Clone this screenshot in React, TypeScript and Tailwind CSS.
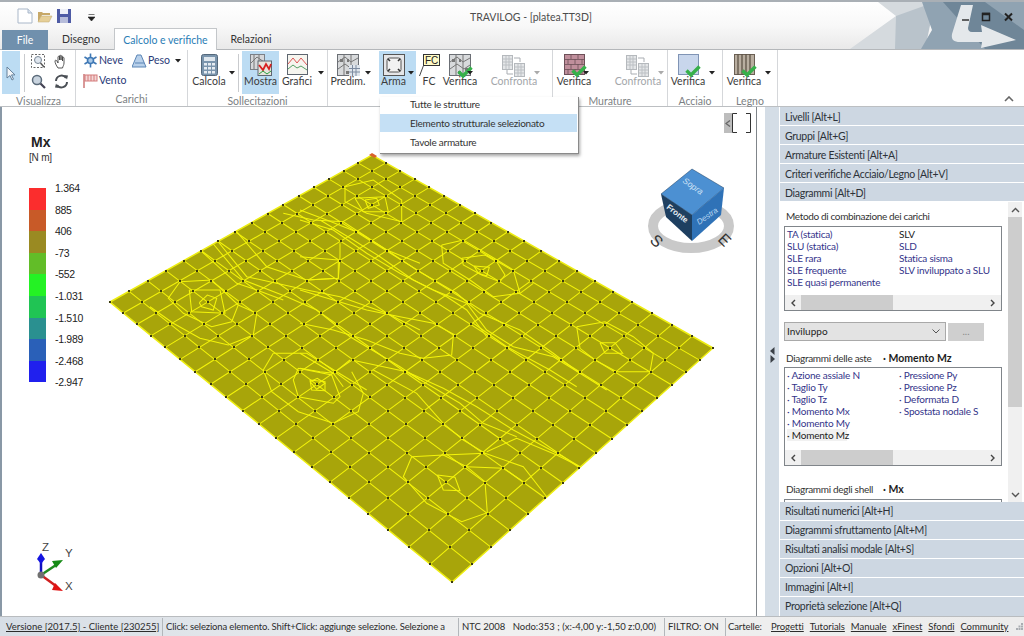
import React from "react";

const F = { fontFamily: 'Lato, "Noto Sans", sans-serif' };

/* ---------- small icons ---------- */
const Check = () => (
  <svg className="absolute right-[-2px] bottom-[-2px]" width="16" height="12" viewBox="0 0 16 12">
    <path d="M1.5 5.5 L6 10 L14.500 1.500" fill="none" stroke="#36b04a" strokeWidth="3.4" />
  </svg>
);
const Mosaic = () => (
  <svg width="22" height="22" viewBox="0 0 22 22">
    <rect x="0.5" y="0.5" width="21" height="21" fill="#d8dadc" stroke="#6b6f75" />
    <path d="M1 8 L8 3 L14 8 L21 4 M1 15 L8 10 L15 15 L21 11 M7 1 V21 M14 1 V21" fill="none" stroke="#777" strokeWidth="1" />
    <path d="M3 5h3v3h-3zM16 14h3v3h-3zM9 17h3v3h-3zM10 5h2v3h-2z" fill="#777" />
  </svg>
);
const ChevDown = () => (
  <svg width="6" height="4" viewBox="0 0 6 4"><path d="M0 0h6L3 3.5z" fill="#222" /></svg>
);
const ChevDownGray = () => (
  <svg width="6" height="4" viewBox="0 0 6 4"><path d="M0 0h6L3 3.5z" fill="#aaa" /></svg>
);
const Sheets = () => (
  <svg width="24" height="24" viewBox="0 0 24 24">
    <g fill="#e4e6e8" stroke="#b5b9bd">
      <rect x="0.5" y="1.5" width="10" height="14" />
      <rect x="12.5" y="9.5" width="10" height="13" />
    </g>
    <path d="M1 5h9M1 8h9M1 11h9M13 13h9M13 16h9M13 19h9M16 10v12M19 10v12M4 2v13M7 2v13" stroke="#bcc0c4" />
    <path d="M12 4h6v4M11 20H5v-4" fill="none" stroke="#a9adb2" />
  </svg>
);

const Big = ({ w, label, icon, arrow, active, gray, ml = 0, arrowGap = 0, pr = 0 }: { w: number; label: string; icon: React.ReactNode; arrow?: boolean; active?: boolean; gray?: boolean; ml?: number; arrowGap?: number; pr?: number }) => (
  <div className={`relative flex flex-col items-center h-[43px] pt-[3px] ${active ? "bg-[#bcdcf3]" : ""}`} style={{ width: w, marginLeft: ml, paddingRight: pr }}>
    <div className="h-[20px] flex items-start justify-center">{icon}</div>
    <div className={`text-[10.5px] leading-[15px] whitespace-nowrap ${gray ? "text-[#a3a6aa]" : "text-[#3c3c3c]"}`}>{label}</div>
    {arrow && <div className="absolute top-[20px]" style={{ right: -arrowGap }}>{gray ? <ChevDownGray /> : <ChevDown />}</div>}
  </div>
);

const Group = ({ w, label, children }: { w: number; label: string; children: React.ReactNode }) => (
  <div className="relative flex flex-col h-full border-r border-[#d5d7da] shrink-0" style={{ width: w }}>
    <div className="flex h-[43px] mt-[1px]">{children}</div>
    <div className="h-[13px] mt-[1px] text-center text-[10.5px] leading-[13px] text-[#7c7f83] whitespace-nowrap">{label}</div>
  </div>
);

const Acc = ({ t }: { t: string }) => (
  <div className="h-[18px] mb-px shrink-0 bg-[#cdd7e2] pl-[5px] text-[10.5px] tracking-[-0.3px] leading-[20px] text-[#2c3238] whitespace-nowrap overflow-hidden">{t}</div>
);
const AccLow = ({ t, last }: { t: string; last?: boolean }) => (
  <div className={`shrink-0 bg-[#cdd7e2] pl-[5px] text-[10.5px] tracking-[-0.3px] leading-[18px] text-[#2c3238] whitespace-nowrap ${last ? "h-[19px]" : "h-[18px] mb-px"}`}>{t}</div>
);

const HScroll = () => (
  <div className="flex h-[15px] bg-[#f0f0f0] items-center shrink-0 text-[#333]">
    <div className="w-[16px] flex justify-center">
      <svg width="6" height="8" viewBox="0 0 6 8"><path d="M5 1L2 4l3 3" fill="none" stroke="#444" strokeWidth="1.4" /></svg>
    </div>
    <div className="w-[92px] h-full bg-[#cdcdcd]" />
    <div className="flex-1" />
    <div className="w-[16px] flex justify-center">
      <svg width="6" height="8" viewBox="0 0 6 8"><path d="M1 1l3 3-3 3" fill="none" stroke="#444" strokeWidth="1.4" /></svg>
    </div>
  </div>
);

/* ---------- mesh ---------- */
function homography(p: number[][]) {
  const [[x0, y0], [x1, y1], [x2, y2], [x3, y3]] = p;
  const dx1 = x1 - x2, dx2 = x3 - x2, sx = x0 - x1 + x2 - x3;
  const dy1 = y1 - y2, dy2 = y3 - y2, sy = y0 - y1 + y2 - y3;
  const det = dx1 * dy2 - dx2 * dy1;
  const g = (sx * dy2 - dx2 * sy) / det;
  const h = (dx1 * sy - sx * dy1) / det;
  const a = x1 - x0 + g * x1, b = x3 - x0 + h * x3, c = x0;
  const d = y1 - y0 + g * y1, e = y3 - y0 + h * y3, f = y0;
  return (u: number, v: number) => {
    const w = g * u + h * v + 1;
    return [(a * u + b * v + c) / w, (d * u + e * v + f) / w];
  };
}
const H = homography([[110, 302], [372, 155], [713, 348], [452, 582]]);
const NU = 16, NV = 20;
const gridLines: string[] = [];
for (let j = 1; j < NV; j++) {
  const a = H(0, j / NV), b = H(1, j / NV);
  gridLines.push(`M${a[0].toFixed(1)} ${a[1].toFixed(1)}L${b[0].toFixed(1)} ${b[1].toFixed(1)}`);
}
for (let i = 1; i < NU; i++) {
  const a = H(i / NU, 0), b = H(i / NU, 1);
  gridLines.push(`M${a[0].toFixed(1)} ${a[1].toFixed(1)}L${b[0].toFixed(1)} ${b[1].toFixed(1)}`);
}
const nodes: number[][] = [];
for (let i = 0; i <= NU; i++) for (let j = 0; j <= NV; j++) nodes.push(H(i / NU, j / NV));

/* contour lines traced from 3x crops: coordinates are crop pixels, converted with the crop's origin */
const T = (ox: number, oy: number, s: string) =>
  s.split(" ").map((p) => {
    const [x, y] = p.split(",").map(Number);
    return (ox + x / 3).toFixed(1) + "," + (oy + y / 3).toFixed(1);
  }).join(" ");

const contours: string[] = [
  ...[
    "522,228 568,232 560,258 535,250 522,228",
    "485,205 555,195 590,215 615,255 600,275 545,255 490,225 485,205",
    "425,165 490,150 575,200 640,240 660,310 580,320 510,270 430,220 425,165",
    "0,60 80,90 180,130 260,180 350,240 470,310 540,370 660,420 760,490 840,550",
    "0,90 100,120 200,190 300,250 400,300 500,340 560,420 640,470 760,500 840,550 920,600",
    "60,90 160,150 240,200 340,270 440,320 500,360 560,440",
    "115,210 115,265 20,270",
    "0,200 115,210",
    "460,435 455,495 370,505 300,490 200,450 100,420 0,400",
    "0,300 100,330 200,360 300,380 400,400 465,435",
    "520,400 620,470 750,540 830,590",
    "660,310 700,280",
    "900,458 945,458 968,490 915,490 900,458",
    "830,410 915,395 1000,440 1060,490 1050,545 950,545 885,510 840,475 830,410",
    "0,490 100,550 150,510",
    "0,535 60,545 100,550 130,590",
    "30,575 52,565 75,580 50,598 30,575",
  ].map((s) => T(300, 190, s)),
  ...[
    "240,60 285,65 285,92 245,90 240,60",
    "205,25 305,45 330,110 310,130 205,110 190,60 205,25",
    "100,30 125,95 205,155 310,190 385,155 400,100 365,35",
    "622,345 675,352 690,392 640,390 622,345",
    "545,290 640,285 710,320 765,365 772,458 695,485 590,430 520,350 545,290",
    "365,0 530,35 640,85 740,140 850,210 1000,290 1050,320",
    "430,30 560,100 640,190 700,240 765,280 880,320 950,410",
    "770,275 860,235 980,285 1050,320",
    "640,285 765,280",
    "710,320 820,325 880,365",
    "530,35 690,130 760,190 860,230",
  ].map((s) => T(230, 360, s)),
  ...[
    "298,458 322,435 350,445 340,480 305,470 298,458",
    "268,420 360,420 375,490 275,485 268,420",
    "240,395 335,390 415,465 395,515 335,530 250,490 205,445 240,395",
    "415,465 470,490 460,555 385,585 300,565 220,520 150,470",
    "250,330 300,300 410,400 470,420 550,450",
    "330,270 430,390 560,440 650,480 750,560 900,650 960,690",
    "350,270 440,380 620,420 720,440 860,490 960,540",
    "410,245 500,350 620,390 715,385 720,320 720,280",
    "550,190 640,210 730,215 860,300 960,340",
    "520,610 620,610 710,665 800,720",
    "490,660 520,610",
    "795,150 830,145 838,165 805,175 795,150",
    "765,145 855,140 865,185 790,185 765,145",
    "735,110 820,90 905,150 905,215 800,190 735,155 735,110",
  ].map((s) => T(100, 150, s)),
];

const PLATE = "110,302 372,155 713,348 452,582";

const Mesh = () => (
  <svg className="absolute left-0 top-0" width="756" height="509" viewBox="0 107 756 509">
    <defs>
      <clipPath id="plate"><polygon points={PLATE} /></clipPath>
    </defs>
    <polygon points={PLATE} fill="#a8a50a" stroke="#eded10" strokeWidth="1.5" />
    <g clipPath="url(#plate)" fill="none" stroke="#f4f40a" strokeWidth="1.05">
      <path d={gridLines.join("")} />
      {contours.map((p, k) => <polyline key={k} points={p} />)}
    </g>
    <g fill="#3a3a10">
      {nodes.map(([x, y], k) => <rect key={k} x={Math.round(x) - 1} y={Math.round(y) - 1} width="2" height="2" />)}
    </g>
    <path d="M369 155l3-2 5 3-2 2z" fill="#d9622b" />
  </svg>
);

const Cube = () => (
  <svg className="absolute left-0 top-0" width="756" height="509" viewBox="0 107 756 509">
    <ellipse cx="691" cy="226" rx="38" ry="22" fill="none" stroke="#c9c9c9" strokeWidth="10" />
    <polygon points="692,169 724,188 692,215 661,194" fill="#4c90d2" stroke="#1e3f60" strokeWidth="0.5" />
    <polygon points="661,194 692,215 692,241 666,217" fill="#1e3f60" />
    <polygon points="692,215 724,188 721,215 692,241" fill="#2f72b7" />
    <g style={{ fontFamily: '"Liberation Sans", sans-serif' }}>
      <text x="0" y="0" transform="translate(682,182) rotate(35)" fontSize="8.5" fill="#cfe3f6" fontStyle="italic">Sopra</text>
      <text x="0" y="0" transform="translate(666,208) rotate(38)" fontSize="8" fontWeight="700" fill="#e4ebf1">Fronte</text>
      <text x="0" y="0" transform="translate(699,225) rotate(-35)" fontSize="8" fill="#b9d7f2" fontStyle="italic">Destra</text>
      <text x="0" y="0" transform="translate(649,241) rotate(45)" fontSize="16" fill="#333">S</text>
      <text x="0" y="0" transform="translate(717,240) rotate(45)" fontSize="16" fill="#333">E</text>
    </g>
  </svg>
);

const Axes = () => (
  <svg className="absolute left-[30px] top-[432px]" width="50" height="55" viewBox="30 539 50 55">
    <path d="M41 575V558" stroke="#1010c0" strokeWidth="2.5" />
    <path d="M41 553l4 6-4 5-4-5z" fill="#1414e0" />
    <path d="M41 575L56 565" stroke="#1f8a1f" strokeWidth="2.5" />
    <path d="M63 560l-11 1 4 7z" fill="#148a14" />
    <path d="M41 575L56 586" stroke="#d02020" strokeWidth="2.5" />
    <path d="M63 591l-11-1 3-7z" fill="#e01414" />
    <circle cx="41" cy="575" r="3.5" fill="#707070" />
    <g fontSize="11.5" fill="#444" style={{ fontFamily: '"Liberation Sans", sans-serif' }}>
      <text x="42" y="551">Z</text>
      <text x="65" y="557">Y</text>
      <text x="65" y="590">X</text>
    </g>
  </svg>
);

const legend = [
  ["#fb2d2d", "1.364"], ["#c85a28", "885"], ["#9a8a22", "406"], ["#62bd28", "-73"], ["#24f224", "-552"],
  ["#20c454", "-1.031"], ["#2a9090", "-1.510"], ["#2a60b8", "-1.989"], ["#2020ee", "-2.468"],
];

const Legend = () => (
  <div className="absolute left-[29px] top-[27px] flex flex-col" style={{ fontFamily: '"Liberation Sans", sans-serif' }}>
    <div className="text-[14px] leading-[16px] font-bold text-[#222] ml-[2px] h-[16px]">Mx</div>
    <div className="text-[10px] leading-[12px] text-[#333] h-[12px] mt-[2px] tracking-[-0.2px]">[N m]</div>
    <div className="flex mt-[24px]">
      <div className="flex flex-col w-[17px]">
        {legend.map(([c]) => <div key={c} className="h-[21.6px]" style={{ background: c }} />)}
      </div>
      <div className="ml-[9px] -mt-[7px] flex flex-col text-[10.5px] tracking-[-0.3px] text-[#222]">
        {legend.map(([c, t]) => <div key={c} className="h-[21.6px] leading-[14px]">{t}</div>)}
        <div className="h-[14px] leading-[14px]">-2.947</div>
      </div>
    </div>
  </div>
);

const Sep = () => <div className="w-px h-[18px] bg-[#b3b7bb] mx-[2px] shrink-0" />;

export default function App() {
  const u = "underline whitespace-nowrap";
  const listText = "flex-1 flex pl-[2px] pt-[1px] text-[#34348a] text-[10px] tracking-[-0.2px] leading-[12px] whitespace-nowrap";
  return (
    <div className="relative w-[1024px] h-[636px] overflow-hidden bg-white flex flex-col text-[#333]" style={F}>
      {/* title + tabs */}
      <div className="relative h-[50px] shrink-0 border-t-2 border-[#a9afb5] bg-gradient-to-b from-white via-[#f8f8f8] to-[#e9e9e9] border-b border-b-[#b4b7ba]">
        <svg className="absolute right-0 top-0" width="176" height="47" viewBox="848 2 176 47">
          <polygon points="878,2 940,2 895,49 850,49 896,16" fill="#d5dade" />
          <polygon points="896,16 935,2 925,49 895,49" fill="#b9c3cb" />
          <polygon points="922,2 1024,2 1024,49 921,49 932,30" fill="#90a3b2" />
          <polygon points="943,2 985,2 1024,30 1024,49 985,49" fill="#6f8698" />
          <path d="M961 5h12l-5 23c0 2 1 4 4 4h10l-1-7 35 15-35 8 1-6h-22c-6 0-9-2-8-8z" fill="#e4e8eb" />
        </svg>
        <svg className="absolute left-[17px] top-[6px]" width="60" height="16" viewBox="0 0 60 16">
          <path d="M1 1h10l4 4v10H1z" fill="#fff" stroke="#a9b7c9" />
          <path d="M11 1v4h4" fill="#dce5f0" stroke="#a9b7c9" />
          <path d="M21 4h4l1 1h7v2H25l-3 6h-1z" fill="#c7a868" />
          <path d="M24 8h11l-3 6H21z" fill="#e6cf98" stroke="#bca66e" strokeWidth="0.5" />
          <rect x="40" y="1" width="14" height="14" fill="#4e5ba5" />
          <rect x="43" y="1" width="8" height="5" fill="#eef0f8" />
          <rect x="43" y="9" width="8" height="6" fill="#b6bcda" />
        </svg>
        <svg className="absolute left-[88px] top-[12px]" width="7" height="7" viewBox="0 0 7 7">
          <path d="M0.5 0.5h6M0 3h7L3.5 7z" fill="#222" stroke="#222" strokeWidth="0.6" />
        </svg>
        <div className="absolute left-[470px] top-[7px] text-[10.5px] leading-[16px] text-[#4c4c4c] whitespace-nowrap">TRAVILOG - [platea.TT3D]</div>
        <svg className="absolute left-[960px] top-[9px]" width="56" height="12" viewBox="0 0 56 12">
          <path d="M2 9h7" stroke="#333" strokeWidth="1.5" />
          <rect x="22.5" y="2.5" width="7" height="7" fill="none" stroke="#222" strokeWidth="1.5" />
          <path d="M22 3h8" stroke="#222" strokeWidth="2.5" />
          <path d="M45 2.5l7 7M52 2.5l-7 7" stroke="#222" strokeWidth="2" />
        </svg>
        <div className="absolute left-[2px] top-[27px] h-[21px] flex items-end">
          <div className="w-[46px] h-[20px] bg-[#7090ad] text-white text-[10.5px] leading-[20px] text-center">File</div>
          <div className="w-[66px] h-[21px] text-center text-[10.5px] leading-[20px] text-[#333]">Disegno</div>
          <div className="w-[103px] h-[23px] -mb-[1px] bg-white border border-b-0 border-[#c4c7ca] text-center text-[10.5px] leading-[22px] text-[#2a7db5] whitespace-nowrap">Calcolo e verifiche</div>
          <div className="w-[68px] h-[21px] text-center text-[10.5px] leading-[20px] text-[#333]">Relazioni</div>
        </div>
      </div>

      {/* ribbon */}
      <div className="relative h-[57px] shrink-0 bg-white border-b border-[#bcbfc2] flex pl-[2px]">
        <Group w={74} label="Visualizza">
          <div className="w-[18px] h-[43px] bg-[#bcdcf3] flex justify-center pt-[15px]">
            <svg width="10" height="15" viewBox="0 0 10 15"><path d="M1 1v11l3-2.5 2 4.5 1.5-.8-2-4.3H9z" fill="#f3f6f9" stroke="#65819b" /></svg>
          </div>
          <div className="w-px h-[38px] bg-[#c9cbce] ml-[4px] mt-[3px]" />
          <div className="grid grid-cols-2 gap-x-[7px] gap-y-[5px] ml-[6px] mt-[3px] content-start">
            <svg width="15" height="15" viewBox="0 0 15 15"><rect x="0.5" y="0.5" width="13" height="13" fill="none" stroke="#666" strokeDasharray="2 1.5" /><circle cx="7" cy="6" r="3.5" fill="#dfe6ee" stroke="#7a8896" /><path d="M9.5 9l3.5 4" stroke="#555" strokeWidth="1.5" /></svg>
            <svg width="16" height="15" viewBox="0 0 16 15"><path d="M4 14C2 11 1 9 1 7c0-1 1-1 2 0l1 2V3c0-1 1.500-1 1.500 0v3V2c0-1 1.500-1 1.500 0v4V2.500c0-1 1.500-1 1.500 0V7V4c0-1 1.500-1 1.500 0v5c0 2-1 3-1.500 5z" fill="#fff" stroke="#444" strokeWidth="0.9" /></svg>
            <svg width="15" height="15" viewBox="0 0 15 15"><circle cx="6" cy="6" r="4.5" fill="#c9d4df" stroke="#5b6b7a" strokeWidth="1.5" /><path d="M9.500 9.500L14 14" stroke="#445" strokeWidth="2.2" /></svg>
            <svg width="15" height="15" viewBox="0 0 15 15"><path d="M2 7A5.500 5.500 0 0 1 12 4M13 8A5.500 5.500 0 0 1 3 11" fill="none" stroke="#4a4f55" strokeWidth="2" /><path d="M10 1l4 .5-1 4zM5 14l-4-.5 1-4z" fill="#4a4f55" /></svg>
          </div>
        </Group>

        <Group w={112} label="Carichi">
          <div className="pl-[7px] pt-[2px] flex flex-col gap-[5px]">
            <div className="flex items-center h-[15px]">
              <svg width="15" height="15" viewBox="0 0 15 15"><g stroke="#3f78b5" strokeWidth="1.6" fill="none"><path d="M7.500 0.500v14M1.500 4l12 7M13.500 4l-12 7" /><circle cx="7.500" cy="7.500" r="3" fill="#a9c9e8" /></g></svg>
              <span className="text-[10.5px] ml-[1px] w-[33px] leading-[15px] text-[#2a3a78]">Neve</span>
              <svg width="15" height="14" viewBox="0 0 15 14"><path d="M5 1h4l5 12H0z" fill="#b8d0ea" stroke="#5b85b5" /><path d="M3 9h9" stroke="#5b85b5" /></svg>
              <span className="text-[10.5px] ml-[1px] w-[27px] leading-[15px] text-[#2a3a78]">Peso</span>
              <span className="flex"><ChevDown /></span>
            </div>
            <div className="flex items-center h-[15px]">
              <svg width="15" height="15" viewBox="0 0 15 15"><path d="M1 1v14" stroke="#c77" strokeWidth="1.500" /><rect x="2" y="2" width="12" height="6" fill="#f3d7d7" stroke="#d47a7a" /><path d="M5 2v6M8 2v6M11 2v6" stroke="#d47a7a" /></svg>
              <span className="text-[10.5px] ml-[1px] leading-[15px] text-[#2a3a78]">Vento</span>
            </div>
          </div>
        </Group>

        <Group w={140} label="Sollecitazioni">
          <Big w={32} ml={5} label="Calcola" arrow arrowGap={10} icon={
            <svg width="17" height="22" viewBox="0 0 17 22"><rect x="0.500" y="0.500" width="16" height="21" rx="2" fill="#7b95ad" stroke="#54687b" /><rect x="3" y="3" width="11" height="4" fill="#dfe7ee" /><g fill="#e6ecf2"><rect x="3" y="9" width="3" height="2.500" /><rect x="7" y="9" width="3" height="2.500" /><rect x="11" y="9" width="3" height="2.500" /><rect x="3" y="13" width="3" height="2.500" /><rect x="7" y="13" width="3" height="2.500" /><rect x="11" y="13" width="3" height="2.500" /><rect x="3" y="17" width="3" height="2.500" /><rect x="7" y="17" width="3" height="2.500" /><rect x="11" y="17" width="3" height="2.500" /></g></svg>
          } />
          <div className="w-px h-[38px] bg-[#c9cbce] ml-[13px] mt-[3px]" />
          <Big w={37} ml={3} label="Mostra" active icon={
            <svg width="22" height="22" viewBox="0 0 22 22"><rect x="0.500" y="0.500" width="14" height="15" fill="#d5d7da" stroke="#7b8087" /><path d="M1 9l6-6 7 5M4 1v14M9 1v14" stroke="#777" fill="none" /><rect x="8" y="7" width="13.500" height="14.500" fill="#e7e4dd" stroke="#5e6670" /><path d="M9 11l4 5 3-6 3 5 2-5" fill="none" stroke="#d72020" strokeWidth="1.800" /><path d="M9 20l4-3 4 3 4-3" fill="none" stroke="#2b9f3d" /></svg>
          } />
          <Big w={36} label="Grafici" arrow arrowGap={9} icon={
            <svg width="21" height="21" viewBox="0 0 21 21"><rect x="0.500" y="0.500" width="20" height="20" fill="#f6f5ef" stroke="#5e6670" /><path d="M1 10l5-6 4 5 4-5 6 7" fill="none" stroke="#dc5555" /><path d="M1 15l5-4 4 3 4-2 6 4" fill="none" stroke="#55a066" /></svg>
          } />
        </Group>

        <Group w={225} label="">
          <Big w={40} ml={0} label="Predim." arrow arrowGap={3} icon={
            <div className="relative"><Mosaic /><svg className="absolute right-[-1px] bottom-0" width="11" height="11" viewBox="0 0 11 11"><rect width="11" height="11" fill="#dfe5ec" /><path d="M0 3.500h11M0 7h11M3.500 0v11M7 0v11" stroke="#7d8ba0" /></svg></div>
          } />
          <Big w={37} ml={11} pr={8} label="Arma" active arrow arrowGap={-2} icon={
            <svg width="22" height="22" viewBox="0 0 22 22"><rect x="0.500" y="0.500" width="21" height="21" fill="#e5e6e8" stroke="#555" /><rect x="4" y="4" width="14" height="14" rx="2.500" fill="#f2f2f2" stroke="#555" /><path d="M5 5l2 2M17 5l-2 2M5 17l2-2M17 17l-2-2" stroke="#333" strokeWidth="1.600" /></svg>
          } />
          <Big w={26} label="FC" icon={
            <svg width="21" height="24" viewBox="0 0 21 24"><rect x="4.500" y="0.500" width="16" height="11" fill="#fffbc6" stroke="#333" /><path d="M4.500 11.500L0.500 22" stroke="#444" /><text x="6" y="10" fontSize="10" fill="#222" style={{ fontFamily: '"Liberation Sans",sans-serif' }}>FC</text></svg>
          } />
          <Big w={36} label="Verifica" arrow arrowGap={-5} icon={<div className="relative"><Mosaic /><Check /></div>} />
          <Big w={54} ml={9} label="Confronta" gray arrow arrowGap={-1} icon={<Sheets />} />
        </Group>

        <Group w={115} label="Murature">
          <Big w={36} ml={3} label="Verifica" arrow arrowGap={-3} icon={
            <div className="relative"><svg width="21" height="21" viewBox="0 0 21 21"><rect x="0.500" y="0.500" width="20" height="20" fill="#c08f9c" stroke="#6d5058" /><path d="M0 5.500h21M0 10.500h21M0 15.500h21M7 0v5M14 0v5M4 5v5M11 5v5M18 5v5M7 10v5M14 10v5M4 15v5M11 15v5M18 15v5" stroke="#6d5058" strokeWidth="0.800" /></svg><Check /></div>
          } />
          <Big w={54} ml={19} label="Confronta" gray arrow arrowGap={-1} icon={<Sheets />} />
        </Group>

        <Group w={55} label="Acciaio">
          <Big w={36} ml={2} label="Verifica" arrow arrowGap={9} icon={
            <div className="relative"><svg width="21" height="21" viewBox="0 0 21 21"><rect x="0.500" y="0.500" width="20" height="20" fill="#c8d6ec" stroke="#8094b5" /></svg><Check /></div>
          } />
        </Group>

        <Group w={55} label="Legno">
          <Big w={36} ml={3} label="Verifica" arrow arrowGap={9} icon={
            <div className="relative"><svg width="21" height="21" viewBox="0 0 21 21"><rect x="0.500" y="0.500" width="20" height="20" fill="#b9aea0" stroke="#6b6054" /><path d="M4 0v21M8 0v21M12 0v21M16 0v21" stroke="#5f5548" strokeWidth="1.300" /></svg><Check /></div>
          } />
        </Group>

        <svg className="absolute left-[1004px] top-[46px]" width="10" height="6" viewBox="0 0 10 6"><path d="M1 5l4-4 4 4" fill="none" stroke="#666" strokeWidth="1.600" /></svg>
      </div>

      {/* main */}
      <div className="flex h-[509px] shrink-0">
        <div className="relative w-[757px] h-full bg-white border-l-2 border-l-[#8998a6] border-r border-r-[#80858a] shrink-0 overflow-hidden">
          <div className="absolute left-[-2px] top-0 w-[756px] h-[509px]">
            <Mesh />
            <Cube />
            <Legend />
            <Axes />
            <div className="absolute left-[724px] top-[6px] w-[27px] h-[20px] flex">
              <div className="w-[8px] h-full bg-[#bdbdbd] flex items-center justify-center">
                <svg width="6" height="7" viewBox="0 0 6 7"><path d="M5 0.500L1 3.500l4 3" fill="none" stroke="#666" strokeWidth="1.300" /></svg>
              </div>
              <svg width="19" height="20" viewBox="0 0 19 20"><path d="M5 .5H.5v19H5M14 .5h4.500v19H14" fill="none" stroke="#333" /></svg>
            </div>
          </div>
        </div>

        {/* splitter strip */}
        <div className="w-[8px] bg-white shrink-0" />
        <div className="w-[14px] bg-[#d4dde6] shrink-0 flex items-center justify-center">
          <svg width="5" height="16" viewBox="0 0 5 16" className="mt-[-13px]"><path d="M4.500 0L0 4l4.500 4zM.5 8l4.500 4-4.500 4z" fill="#3b4147" /></svg>
        </div>
        <div className="w-[1px] bg-white shrink-0" />

        {/* accordion */}
        <div className="flex-1 min-w-0 flex flex-col">
          <Acc t="Livelli [Alt+L]" />
          <Acc t="Gruppi [Alt+G]" />
          <Acc t="Armature Esistenti [Alt+A]" />
          <Acc t="Criteri verifiche Acciaio/Legno [Alt+V]" />
          <Acc t="Diagrammi [Alt+D]" />
          <div className="relative flex-1 min-h-0 flex overflow-hidden bg-white">
            <div className="w-[228px] pl-[4px] pt-[6px] shrink-0">
              <div className="pl-[2px] h-[18px] leading-[17px] text-[10px] tracking-[-0.35px] text-[#333] whitespace-nowrap">Metodo di combinazione dei carichi</div>
              <div className="h-[85px] w-[218px] border border-[#80858a] flex flex-col">
                <div className={listText}>
                  <div className="w-[112px]"><div>TA (statica)</div><div>SLU (statica)</div><div>SLE rara</div><div>SLE frequente</div><div>SLE quasi permanente</div></div>
                  <div><div className="text-[#222]">SLV</div><div>SLD</div><div>Statica sisma</div><div>SLV inviluppato a SLU</div></div>
                </div>
                <HScroll />
              </div>
              <div className="flex mt-[11px] h-[19px]">
                <div className="w-[162px] h-full bg-[#e3e3e3] border border-[#a9a9a9] flex items-center justify-between pl-[2px] pr-[5px] text-[10px] text-[#222]">
                  <span>Inviluppo</span>
                  <svg width="8" height="5" viewBox="0 0 8 5"><path d="M.5.5L4 4 7.500.5" fill="none" stroke="#555" /></svg>
                </div>
                <div className="w-[36px] h-[18px] ml-[2px] mt-[1px] bg-[#cfcfcf] text-center text-[10px] leading-[17px] text-[#8a8a8a]">...</div>
              </div>
              <div className="flex h-[18px] mt-[8px] pl-[2px] text-[10px] leading-[18px] whitespace-nowrap">
                <span className="w-[97px] text-[#333] tracking-[-0.3px]">Diagrammi delle aste</span>
                <span className="font-bold text-[#1e1e1e] text-[10.5px]">· Momento Mz</span>
              </div>
              <div className="h-[99px] w-[218px] border border-[#80858a] flex flex-col">
                <div className={listText}>
                  <div className="w-[112px]"><div>· Azione assiale N</div><div>· Taglio Ty</div><div>· Taglio Tz</div><div>· Momento Mx</div><div>· Momento My</div><div className="bg-[#f1f1f1] text-[#222] w-[60px]">· Momento Mz</div></div>
                  <div><div>· Pressione Py</div><div>· Pressione Pz</div><div>· Deformata D</div><div>· Spostata nodale S</div></div>
                </div>
                <HScroll />
              </div>
              <div className="flex h-[18px] mt-[14px] pl-[2px] text-[10px] leading-[18px] whitespace-nowrap">
                <span className="w-[97px] text-[#333] tracking-[-0.3px]">Diagrammi degli shell</span>
                <span className="font-bold text-[#1e1e1e] text-[10.5px]">· Mx</span>
              </div>
              <div className="w-[218px] h-[10px] border-t border-x border-[#80858a] mt-[1px]" />
            </div>
            <div className="w-[14px] h-full bg-[#f0f0f0] flex flex-col items-center shrink-0">
              <div className="h-[15px] flex items-center"><svg width="9" height="6" viewBox="0 0 9 6"><path d="M1 5l3.500-3.500L8 5" fill="none" stroke="#555" strokeWidth="1.400" /></svg></div>
              <div className="w-full h-[190px] bg-[#cdcdcd]" />
              <div className="flex-1" />
              <div className="h-[15px] flex items-center"><svg width="9" height="6" viewBox="0 0 9 6"><path d="M1 1l3.500 3.500L8 1" fill="none" stroke="#555" strokeWidth="1.400" /></svg></div>
            </div>
          </div>
          <AccLow t="Risultati numerici [Alt+H]" />
          <AccLow t="Diagrammi sfruttamento [Alt+M]" />
          <AccLow t="Risultati analisi modale [Alt+S]" />
          <AccLow t="Opzioni [Alt+O]" />
          <AccLow t="Immagini [Alt+I]" />
          <AccLow t="Proprietà selezione [Alt+Q]" last />
        </div>
      </div>

      {/* status bar */}
      <div className="h-[20px] flex-1 flex items-center border-t border-[#b9bcbf] bg-gradient-to-r from-[#d7dee6] via-[#f0f0f0] to-[#ececec] text-[9.5px] leading-[18px] text-[#2c2c2c] pl-[6px] whitespace-nowrap overflow-hidden">
        <span className={`${u} w-[154px]`}>Versione [2017.5] - Cliente [230255]</span>
        <Sep />
        <span className="w-[290px] overflow-hidden ml-[1px] tracking-[-0.15px]">Click: seleziona elemento. Shift+Click: aggiunge selezione. Selezione a</span>
        <Sep />
        <span className="ml-[1px] w-[200px]">NTC 2008&nbsp;&nbsp;&nbsp;Nodo:353 ; (x:-4,00 y:-1,50 z:0,00)</span>
        <Sep />
        <span className="ml-[1px] w-[55px]">FILTRO: ON</span>
        <Sep />
        <span className="w-[36px] tracking-[-0.1px]">Cartelle:</span>
        <div className="flex gap-[6px] ml-[7px] tracking-[-0.05px]">
          <span className={u}>Progetti</span><span className={u}>Tutorials</span><span className={u}>Manuale</span><span className={u}>xFinest</span><span className={u}>Sfondi</span><span className={u}>Community</span>
        </div>
        <svg className="ml-[8px] shrink-0" width="7" height="7" viewBox="0 0 7 7"><path d="M5 0h2v2H5zM2.500 2.500h2v2h-2zM5 2.500h2v2H5zM0 5h2v2H0zM2.500 5h2v2h-2zM5 5h2v2H5z" fill="#a9adb2" /></svg>
      </div>

      {/* drop-down menu */}
      <div className="absolute left-[380px] top-[97px] w-[199px] h-[57px] bg-white border-r border-b border-[#8a8a8a] shadow-[1px_2px_3px_rgba(0,0,0,0.35)] text-[10px] tracking-[-0.25px] text-[#333] whitespace-nowrap">
        <div className="h-[17px] pl-[30px] leading-[14px]">Tutte le strutture</div>
        <div className="h-[18px] bg-[#c5e0f5] pl-[30px] leading-[18px] w-[197px]">Elemento strutturale selezionato</div>
        <div className="h-[21px] pl-[30px] leading-[20px]">Tavole armature</div>
      </div>
    </div>
  );
}
